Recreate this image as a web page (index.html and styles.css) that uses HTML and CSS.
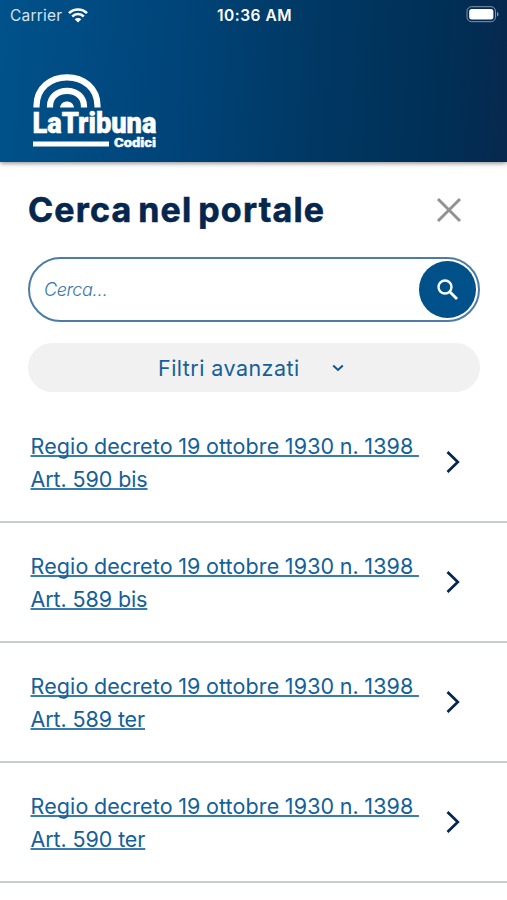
FILE: index.html
```html
<!DOCTYPE html>
<html lang="it">
<head>
<meta charset="utf-8">
<title>La Tribuna Codici</title>
<link rel="stylesheet" href="styles.css">
</head>
<body>
<header class="header">
  <div class="status">
    <div class="carrier"><span>Carrier</span>
      <svg width="20" height="15" viewBox="0 0 20 15" fill="none" stroke="#fff" stroke-width="2.5"><path d="M1 5.2C6 .1 14 .1 19 5.2M4.2 8.5C7.5 5.2 12.5 5.2 15.8 8.5"/><path d="M6.7 11.3C8.6 9.4 11.4 9.4 13.3 11.3L10 14.6Z" fill="#fff" stroke="none"/></svg>
    </div>
    <span class="clock">10:36 AM</span>
    <svg class="battery" width="34" height="18" viewBox="0 0 34 18"><rect x="2" y="1.700" width="28.5" height="15" rx="4.500" fill="none" stroke="#8795ab" stroke-width="1"/><rect x="4.200" y="4" width="24.200" height="10.400" rx="2.500" fill="#fff"/><path d="M32 7c2 .7 2 3.900 0 4.600Z" fill="#8795ab"/></svg>
  </div>
  <svg class="logo" width="132" height="80" viewBox="0 0 132 80">
    <g fill="none" stroke="#fff" stroke-width="6.200"><path d="M4.500 35.500V34C4.500 16 18.500 5.300 35 5.300S65.500 16 65.500 34V35.500"/><path d="M18 35.500V34C18 24.500 26 18.800 35 18.800S52 24.500 52 34V35.500"/></g>
    <path d="M28 35.500C29 27.500 41 27.500 42 35.500Z" fill="#fff"/>
    <text class="logo-name" x="0.500" y="61" textLength="124" lengthAdjust="spacingAndGlyphs">LaTribuna</text>
    <rect x="1" y="69.500" width="76" height="5" fill="#fff"/>
    <text class="logo-sub" x="82" y="75" textLength="42" lengthAdjust="spacingAndGlyphs">Codici</text>
  </svg>
</header>
<main>
  <section class="search">
    <div class="title-row">
      <h1>Cerca nel portale</h1>
      <svg width="26" height="26" viewBox="0 0 26 26" fill="none" stroke="#929292" stroke-width="3"><path d="M2 2L24 24M24 2L2 24"/></svg>
    </div>
    <div class="field">
      <span class="placeholder">Cerca…</span>
      <span class="go"><svg width="22" height="22" viewBox="0 0 22 22" fill="none" stroke="#fff" stroke-width="2.400"><circle cx="8" cy="8" r="6.500"/><path d="M12.500 12.500L20 20" stroke-width="2.800"/></svg></span>
    </div>
    <div class="filters"><span>Filtri avanzati</span>
      <svg width="12" height="8" viewBox="0 0 12 8" fill="none" stroke="#0a5590" stroke-width="1.900"><path d="M1.200 1.500L6 6L10.800 1.500"/></svg>
    </div>
  </section>
  <section class="results">
    <div class="row"><a class="link"><span class="law">Regio decreto 19 ottobre 1930 n. 1398&nbsp;</span><br><span class="art">Art. 590 bis</span></a><svg class="chev" width="14" height="24" viewBox="0 0 14 24"><path d="M1.500 2L11.800 12L1.500 22"/></svg></div>
    <div class="row"><a class="link"><span class="law">Regio decreto 19 ottobre 1930 n. 1398&nbsp;</span><br><span class="art">Art. 589 bis</span></a><svg class="chev" width="14" height="24" viewBox="0 0 14 24"><path d="M1.500 2L11.800 12L1.500 22"/></svg></div>
    <div class="row"><a class="link"><span class="law">Regio decreto 19 ottobre 1930 n. 1398&nbsp;</span><br><span class="art">Art. 589 ter</span></a><svg class="chev" width="14" height="24" viewBox="0 0 14 24"><path d="M1.500 2L11.800 12L1.500 22"/></svg></div>
    <div class="row"><a class="link"><span class="law">Regio decreto 19 ottobre 1930 n. 1398&nbsp;</span><br><span class="art">Art. 590 ter</span></a><svg class="chev" width="14" height="24" viewBox="0 0 14 24"><path d="M1.500 2L11.800 12L1.500 22"/></svg></div>
  </section>
</main>
</body>
</html>
```
FILE: styles.css
```css
* { box-sizing: border-box; }
body { margin: 0; background: #fff; font-family: Inter, "Liberation Sans", sans-serif; color: #14609a; }
svg { display: block; flex: none; }
.header { height: 162px; background: linear-gradient(94deg, #00528b 0%, #004479 35%, #003965 60%, #002f55 87%, #08284f 100%); box-shadow: 0 1px 5px rgba(0, 0, 0, .5); }
.status { height: 30px; padding: 0 8px 0 10px; display: grid; grid-template-columns: 1fr auto 1fr; align-items: center; color: #fff; }
.carrier { display: flex; align-items: center; gap: 6px; font-size: 15.5px; letter-spacing: .2px; color: #d5e3ef; }
.clock { font-size: 15.5px; font-weight: 600; letter-spacing: .5px; }
.battery { justify-self: end; margin-top: -2px; }
.logo { margin: 42px 0 0 32px; overflow: visible; }
.logo-name { font: 900 29.5px Roboto, sans-serif; fill: #fff; stroke: #fff; stroke-width: .5px; }
.logo-sub { font: 900 13px Roboto, sans-serif; fill: #fff; stroke: #fff; stroke-width: .4px; }
.search { padding: 0 27px 0 28px; }
.title-row { height: 95px; display: flex; align-items: center; justify-content: space-between; padding-right: 18px; }
h1 { margin: 0; font-size: 34px; line-height: 40px; font-weight: 700; color: #05264d; white-space: nowrap; letter-spacing: 1.200px; word-spacing: -3.500px; -webkit-text-stroke: .6px #05264d; }
.field { height: 65px; border: 2px solid #4a7ca5; border-radius: 33px; display: flex; align-items: center; justify-content: space-between; padding: 0 2px 0 14px; }
.placeholder { font-size: 18px; font-style: italic; font-weight: 300; color: #3579a9; letter-spacing: -.4px; }
.go { width: 57px; height: 57px; border-radius: 50%; background: #00508a; display: flex; align-items: center; justify-content: center; }
.filters { margin-top: 21px; height: 49px; border-radius: 25px; background: #f1f1f1; display: flex; align-items: center; padding-left: 130px; gap: 33px; font-size: 21.500px; }
.filters span { width: 141px; white-space: nowrap; letter-spacing: .45px; }
.results { margin-top: 11px; }
.row { height: 120px; border-bottom: 2px solid #c9cccf; padding: 0 47px 0 30.500px; display: flex; align-items: center; justify-content: space-between; }
.link { font-size: 21.500px; line-height: 32.400px; white-space: nowrap; padding-top: 1.500px; }
.law, .art { text-decoration: underline; text-decoration-color: #3b7cab; text-decoration-thickness: 1.500px; text-underline-offset: 1px; text-decoration-skip-ink: none; }
.law { letter-spacing: .12px; word-spacing: -.7px; }
.art { letter-spacing: -.1px; }
.chev path { fill: none; stroke: #05264d; stroke-width: 2.700px; }
```
